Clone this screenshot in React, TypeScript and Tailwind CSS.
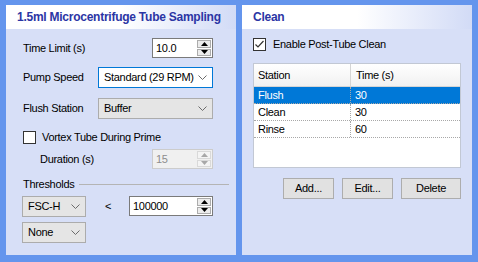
import React from "react";

function Chevron() {
  return (
    <svg width="9" height="5" viewBox="0 0 9 5" className="shrink-0">
      <path d="M0.5 0.5 L4.5 4.5 L8.5 0.5" fill="none" stroke="#6b6b6b" strokeWidth="1" />
    </svg>
  );
}

function Select({ value, w, focused = false }: { value: string; w: string; focused?: boolean }) {
  return (
    <div
      className={`${w} h-[21px] flex items-center justify-between pl-[5px] pr-[5px] border ${
        focused ? "bg-white border-[#0078d7]" : "bg-[#e5e5e5] border-[#acacac]"
      }`}
    >
      <span>{value}</span>
      <Chevron />
    </div>
  );
}

function Tri({ up, color }: { up: boolean; color: string }) {
  return (
    <svg width="7" height="4" viewBox="0 0 7 4">
      {up ? <path d="M0 4 L3.5 0 L7 4 Z" fill={color} /> : <path d="M0 0 L3.5 4 L7 0 Z" fill={color} />}
    </svg>
  );
}

function Spinner({ value, w, disabled = false }: { value: string; w: string; disabled?: boolean }) {
  const tri = disabled ? "#a8a8a8" : "#000";
  return (
    <div
      className={`${w} h-[20px] flex border ${
        disabled ? "bg-[#f0f0f0] border-[#cccccc] text-[#8d8d8d]" : "bg-white border-[#7a7a7a] text-black"
      }`}
    >
      <div className="flex-1 flex items-center pl-[3px]">{value}</div>
      <div className="w-[16px] flex flex-col p-[1px] gap-[1px]">
        <div
          className={`flex-1 flex items-center justify-center border ${
            disabled ? "border-[#d9d9d9] bg-[#f4f4f4]" : "border-[#acacac] bg-[#ececec]"
          }`}
        >
          <Tri up color={tri} />
        </div>
        <div
          className={`flex-1 flex items-center justify-center border ${
            disabled ? "border-[#d9d9d9] bg-[#f4f4f4]" : "border-[#acacac] bg-[#ececec]"
          }`}
        >
          <Tri up={false} color={tri} />
        </div>
      </div>
    </div>
  );
}

function Checkbox({ checked }: { checked: boolean }) {
  return (
    <div className="w-[13px] h-[13px] border border-[#333333] bg-white flex items-center justify-center shrink-0">
      {checked && (
        <svg width="11" height="11" viewBox="0 0 11 11">
          <path d="M1.5 5.5 L4 8 L9.5 2" fill="none" stroke="#333" strokeWidth="1.2" />
        </svg>
      )}
    </div>
  );
}

function Header({ title }: { title: string }) {
  return (
    <div className="h-[24px] flex items-center pl-[11px] bg-gradient-to-r from-white via-white to-[#d2dbf6] text-[12px] font-bold text-[#2b35a4] tracking-[-0.25px]">
      {title}
    </div>
  );
}

function Button({ label, w }: { label: string; w: string }) {
  return (
    <div className={`${w} h-[21px] flex items-center justify-center border border-[#adadad] bg-[#e1e1e1]`}>
      {label}
    </div>
  );
}

export default function App() {
  const rows = [
    ["Flush", "30"],
    ["Clean", "30"],
    ["Rinse", "60"],
  ];
  return (
    <div className="w-[478px] h-[262px] bg-[#6495ed] pt-[5px] pl-[6px] pr-[6px] pb-[7px] flex gap-[6px] font-['Liberation_Sans',Arial,sans-serif] text-[11px] tracking-[-0.3px] text-black">
      {/* Left panel */}
      <div className="w-[230px] h-[250px] bg-[#d7dff7] flex flex-col">
        <Header title="1.5ml Microcentrifuge Tube Sampling" />
        <div className="flex flex-col pl-[17px] pr-[23px]">
          <div className="mt-[9px] h-[20px] flex items-center justify-between">
            <span>Time Limit (s)</span>
            <Spinner value="10.0" w="w-[61px]" />
          </div>
          <div className="mt-[9px] h-[21px] flex items-center justify-between">
            <span>Pump Speed</span>
            <Select value="Standard (29 RPM)" w="w-[115px]" focused />
          </div>
          <div className="mt-[10px] h-[21px] flex items-center justify-between">
            <span>Flush Station</span>
            <Select value="Buffer" w="w-[115px]" />
          </div>
          <div className="mt-[12px] h-[13px] flex items-center gap-[6px]">
            <Checkbox checked={false} />
            <span>Vortex Tube During Prime</span>
          </div>
          <div className="mt-[5px] h-[20px] flex items-center justify-between pl-[17px]">
            <span>Duration (s)</span>
            <Spinner value="15" w="w-[61px]" disabled />
          </div>
          <div className="mt-[8px] h-[14px] flex items-center gap-[5px] -mr-[16px]">
            <span>Thresholds</span>
            <div className="flex-1 h-px bg-[#b4b4b4]" />
          </div>
          <div className="mt-[5px] h-[20px] flex items-center">
            <div className="-ml-[1px]">
              <Select value="FSC-H" w="w-[64px]" />
            </div>
            <span className="ml-[19px]">&lt;</span>
            <div className="ml-auto">
              <Spinner value="100000" w="w-[84px]" />
            </div>
          </div>
          <div className="mt-[6px] h-[21px] flex items-center">
            <div className="-ml-[1px]">
              <Select value="None" w="w-[64px]" />
            </div>
          </div>
        </div>
      </div>

      {/* Right panel */}
      <div className="w-[230px] h-[250px] bg-[#d7dff7] flex flex-col">
        <Header title="Clean" />
        <div className="flex flex-col pl-[11px] pr-[11px]">
          <div className="mt-[9px] h-[13px] flex items-center gap-[7px]">
            <Checkbox checked />
            <span>Enable Post-Tube Clean</span>
          </div>
          <div className="mt-[12px] h-[105px] border border-[#c2c8d4] bg-white flex flex-col">
            <div className="h-[23px] flex border-b border-[#d5d5d5] bg-gradient-to-b from-white to-[#f1f1f1]">
              <div className="w-[97px] flex items-center pl-[4px] border-r border-[#d5d5d5]">Station</div>
              <div className="flex-1 flex items-center pl-[5px]">Time (s)</div>
            </div>
            {rows.map(([s, t], i) => (
              <div
                key={s}
                className={`h-[17px] flex border-b border-dotted border-[#a8a8a8] ${
                  i === 0 ? "bg-[#0078d7] text-white" : ""
                }`}
              >
                <div className="w-[97px] flex items-center pl-[4px] border-r border-dotted border-[#a8a8a8]">{s}</div>
                <div className="flex-1 flex items-center pl-[4px]">{t}</div>
              </div>
            ))}
          </div>
          <div className="mt-[10px] flex justify-end gap-[8px]">
            <Button label="Add..." w="w-[51px]" />
            <Button label="Edit..." w="w-[51px]" />
            <Button label="Delete" w="w-[60px]" />
          </div>
        </div>
      </div>
    </div>
  );
}
